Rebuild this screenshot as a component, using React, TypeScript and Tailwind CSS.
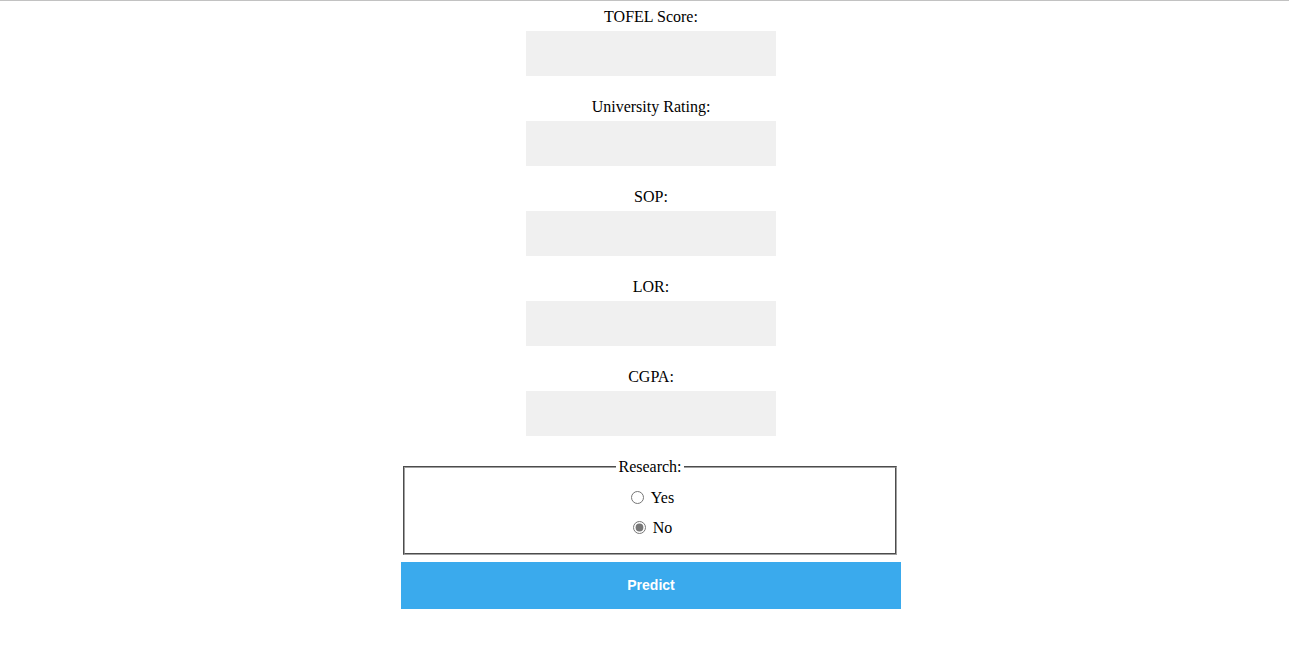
import React from "react";

const fields = ["TOFEL Score:", "University Rating:", "SOP:", "LOR:", "CGPA:"];

export default function App() {
  return (
    <div className="min-h-[647px] bg-white text-black font-['Liberation_Serif',serif] text-base">
      <div className="h-px bg-[#c2c2c2]" />
      <form className="flex flex-col items-center pt-[7px] pl-[13px]">
        {fields.map((f) => (
          <div key={f} className="flex flex-col items-center mb-[22px]">
            <label className="block leading-[18px] mb-[5px] text-center">{f}</label>
            <input type="text" className="w-[250px] h-[45px] bg-[#f0f0f0] border-0 outline-none" />
          </div>
        ))}
        <div className="w-[500px] flex flex-col">
          <fieldset className="ml-[2px] w-[494px] border-2 [border-style:groove] border-[#a0a0a0] px-3 pb-[16px] text-center">
            <legend className="mx-auto px-[2px] leading-[18px]">Research:</legend>
            <div className="mt-[13px] leading-[18px]">
              <input type="radio" name="research" className="accent-[#777] mr-[3px] ml-[5px] align-[-1px]" />
              <span className="ml-[4px]">Yes</span>
            </div>
            <div className="mt-[12px] leading-[18px]">
              <input type="radio" name="research" defaultChecked className="accent-[#777] mr-[3px] ml-[5px] align-[-1px]" />
              <span className="ml-[4px]">No</span>
            </div>
          </fieldset>
          <button
            type="button"
            className="mt-[7px] w-[500px] h-[47px] bg-[#3aaaed] text-white font-bold text-[14px] font-['Liberation_Sans',Arial,sans-serif]"
          >
            Predict
          </button>
        </div>
      </form>
    </div>
  );
}
